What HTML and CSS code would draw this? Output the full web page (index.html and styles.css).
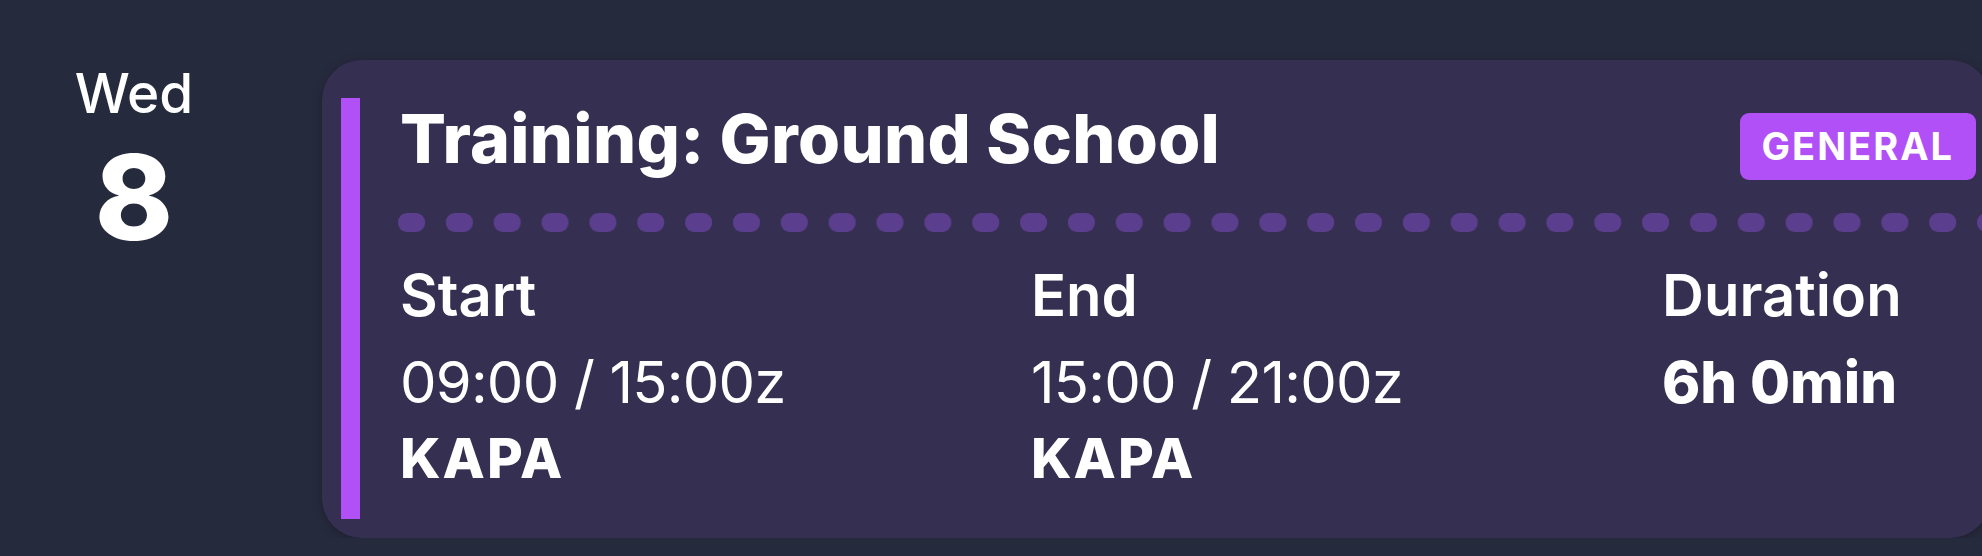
FILE: index.html
```html
<!DOCTYPE html>
<html>
<head>
    <title>Schedule</title>
    <link rel="stylesheet" href="styles.css">
</head>
<body>
    <div class="day-row">
        <div class="day">
            <div class="weekday">Wed</div>
            <div class="date">8</div>
        </div>

        <div class="event">
            <div class="event-bar"></div>
            <div class="event-body">
                <div class="event-head">
                    <h2 class="event-title">Training: Ground School</h2>
                    <span class="tag">GENERAL</span>
                </div>

                <svg class="dots" height="19">
                    <defs>
                        <pattern id="dot" width="47.85" height="19" patternUnits="userSpaceOnUse">
                            <rect x="0" y="0" width="27" height="19" rx="9" fill="#5c3e8f"/>
                        </pattern>
                    </defs>
                    <rect width="100%" height="19" fill="url(#dot)"/>
                </svg>

                <div class="times">
                    <div class="time-col">
                        <div class="label">Start</div>
                        <div class="value">09:00 / 15:00z</div>
                        <div class="place">KAPA</div>
                    </div>
                    <div class="time-col">
                        <div class="label">End</div>
                        <div class="value">15:00 / 21:00z</div>
                        <div class="place">KAPA</div>
                    </div>
                    <div class="time-col">
                        <div class="label">Duration</div>
                        <div class="value bold">6h 0min</div>
                    </div>
                </div>
            </div>
        </div>
    </div>
</body>
</html>
```

FILE: styles.css
```css
body {
    margin: 0;
    background-color: #262a3d;
    color: #fff;
    font-family: Inter, "Noto Sans", sans-serif;
    overflow: hidden;
}

.day-row {
    display: flex;
    padding-top: 60px;
}

.day {
    width: 268px;
    flex-shrink: 0;
    text-align: center;
}
.weekday {
    font-size: 55px;
    line-height: 66px;
    font-weight: 500;
}
.date {
    font-size: 118px;
    line-height: 134px;
    font-weight: 800;
    margin-top: 4px;
}

.event {
    flex: 1;
    display: flex;
    height: 478px;
    box-sizing: border-box;
    margin-left: 54px;
    margin-right: -8px;
    padding: 38px 14px 19px 19px;
    background-color: #352f51;
    border-radius: 40px;
    box-shadow: 0 2px 10px rgba(0,0,0,0.25);
}
.event-bar {
    width: 19px;
    flex-shrink: 0;
    background-color: #b150f7;
}
.event-body {
    flex: 1;
    min-width: 0;
    margin-left: 40px;
}

.event-head {
    display: flex;
    justify-content: space-between;
    align-items: flex-start;
}
.event-title {
    margin: 0;
    font-size: 68px;
    line-height: 80px;
    font-weight: 800;
    letter-spacing: 0.3px;
}
.tag {
    margin-top: 15px;
    padding: 0 22px;
    height: 67px;
    line-height: 67px;
    font-size: 38px;
    font-weight: 700;
    letter-spacing: 2px;
    background-color: #b150f7;
    border-radius: 9px;
}

.dots {
    display: block;
    width: calc(100% + 18px);
    margin: 33px -16px 0 -2px;
}

.times {
    display: grid;
    grid-template-columns: 631px 631px auto;
    margin-top: 32px;
}
.label {
    font-size: 58px;
    line-height: 63px;
    font-weight: 600;
}
.value {
    margin-top: 20px;
    font-size: 58px;
    line-height: 70px;
    font-weight: 400;
    letter-spacing: -0.8px;
}
.value.bold {
    font-weight: 800;
    letter-spacing: 0;
}
.place {
    margin-top: 8px;
    font-size: 55px;
    line-height: 66px;
    font-weight: 800;
    letter-spacing: 2px;
}
```
